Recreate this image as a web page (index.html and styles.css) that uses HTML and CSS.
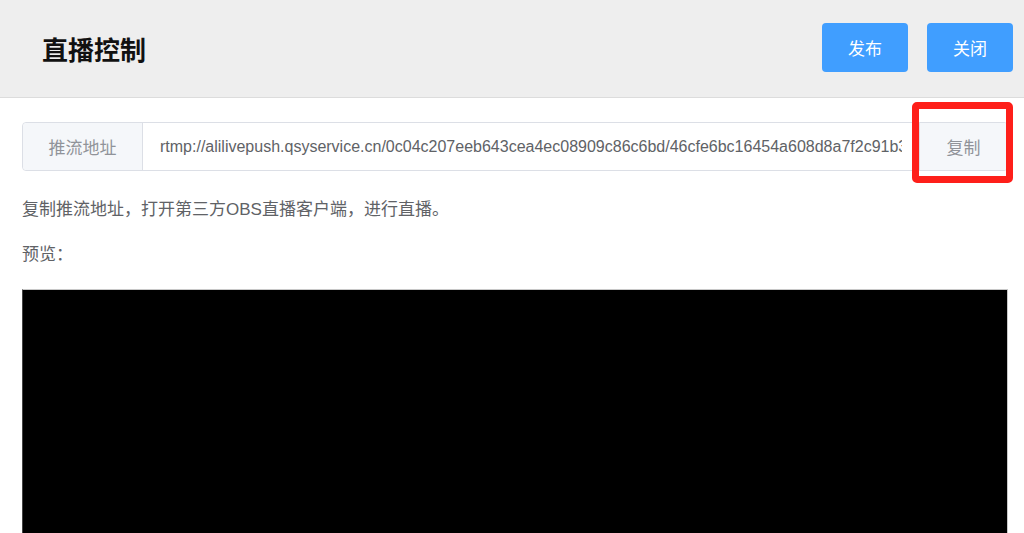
FILE: index.html
```html
<!DOCTYPE html>
<html lang="zh-CN">
<head>
    <meta charset="UTF-8">
    <meta name="viewport" content="width=device-width, initial-scale=1.0">
    <title>直播控制</title>
    <link rel="stylesheet" href="styles.css">
</head>
<body>

<!-- Cabeçalho -->
<div class="header">
    <h2>直播控制</h2>
    <div class="acoes">
        <button class="btn">发布</button>
        <button class="btn">关闭</button>
    </div>
</div>

<div class="conteudo">
    <!-- Endereço de push -->
    <div class="grupo">
        <div class="prefixo">推流地址</div>
        <input class="endereco" type="text" readonly value="rtmp://alilivepush.qsyservice.cn/0c04c207eeb643cea4ec08909c86c6bd/46cfe6bc16454a608d8a7f2c91b3e0d5">
        <div class="sufixo">
            复制
            <span class="marca"></span>
        </div>
    </div>

    <p class="dica">复制推流地址，打开第三方OBS直播客户端，进行直播。</p>
    <p class="dica">预览：</p>

    <div class="video"></div>
</div>

</body>
</html>
```

FILE: styles.css
```css
body {
    font-family: "Liberation Sans", "Noto Sans CJK SC", sans-serif;
    margin: 0;
    padding: 0;
    background-color: #fff;
    color: #606266;
}
.header {
    display: flex;
    align-items: center;
    justify-content: space-between;
    height: 97px;
    padding: 0 11px 0 42px;
    background-color: #eeeeee;
    border-bottom: 1px solid #dcdcdc;
}
.header h2 {
    margin: 0;
    font-size: 26px;
    font-weight: bold;
    color: #111;
}
.acoes {
    display: flex;
    gap: 19px;
    margin-top: -2px;
}
.btn {
    width: 86px;
    height: 49px;
    border: none;
    border-radius: 4px;
    background-color: #409eff;
    color: #fff;
    font-family: inherit;
    font-size: 17px;
    cursor: pointer;
}
.conteudo {
    padding: 24px 16px 0 22px;
}
.grupo {
    position: relative;
    display: flex;
    height: 49px;
    border: 1px solid #dcdfe6;
    border-radius: 4px;
    box-sizing: border-box;
}
.prefixo, .sufixo {
    display: flex;
    align-items: center;
    justify-content: center;
    background-color: #f5f7fa;
    color: #909399;
    font-size: 17px;
}
.prefixo {
    width: 119px;
    border-right: 1px solid #dcdfe6;
    border-radius: 4px 0 0 4px;
}
.sufixo {
    position: relative;
    width: 87px;
    border-left: 1px solid #dcdfe6;
    border-radius: 0 4px 4px 0;
}
.endereco {
    flex: 1;
    min-width: 0;
    border: none;
    outline: none;
    padding: 0 17px;
    font-family: inherit;
    font-size: 16px;
    color: #606266;
    background: transparent;
}
.marca {
    position: absolute;
    left: -8px;
    top: -21px;
    width: 87px;
    height: 67px;
    border: 7px solid #fe1f1a;
    border-radius: 5px;
}
.dica {
    margin: 0;
    font-size: 17px;
    line-height: 20px;
}
.dica:first-of-type {
    margin-top: 29px;
}
.dica + .dica {
    margin-top: 25px;
}
.video {
    margin-top: 24px;
    height: 560px;
    background-color: #000;
    border: 1px solid #c8c8c8;
    border-left-color: #444;
}
```
